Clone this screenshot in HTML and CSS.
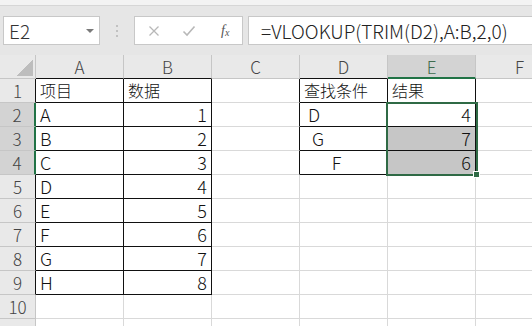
FILE: index.html
```html
<!DOCTYPE html>
<html lang="zh-CN">

<head>
    <meta charset="UTF-8" />
    <meta name="viewport" content="width=device-width, initial-scale=1.0" />
    <title>VLOOKUP TRIM</title>
    <link rel="stylesheet" href="styles.css">
</head>

<body>
    <div class="top-strip"></div>

    <div class="formula-bar">
        <div class="name-box">
            <span>E2</span>
            <span class="caret"></span>
        </div>
        <div class="grip">
            <svg width="4" height="14" viewBox="0 0 4 14">
                <circle cx="2" cy="2" r="1" fill="#b5b5b5" />
                <circle cx="2" cy="7" r="1" fill="#b5b5b5" />
                <circle cx="2" cy="12" r="1" fill="#b5b5b5" />
            </svg>
        </div>
        <div class="fx-box">
            <svg class="icon" width="12" height="12" viewBox="0 0 12 12">
                <path d="M1.5 1.5 L10.5 10.5 M10.5 1.5 L1.5 10.5" stroke="#b8b8b8" stroke-width="1.3" fill="none" />
            </svg>
            <svg class="icon" width="14" height="12" viewBox="0 0 14 12">
                <path d="M1.5 6.5 L5 10 L12.5 1.5" stroke="#b8b8b8" stroke-width="1.6" fill="none" />
            </svg>
            <span class="fx">f<sub>x</sub></span>
        </div>
        <div class="formula-input">=VLOOKUP(TRIM(D2),A:B,2,0)</div>
    </div>

    <div class="sheet" id="sheet">
        <div class="selection">
            <div class="fill-handle"></div>
        </div>
    </div>

    <script>
        const cols = ['', 'A', 'B', 'C', 'D', 'E', 'F'];
        const data = {
            1: ['项目', '数据', '', '查找条件', '结果'],
            2: ['A', 1, '', ' D', 4],
            3: ['B', 2, '', '  G', 7],
            4: ['C', 3, '', '       F', 6],
            5: ['D', 4],
            6: ['E', 5],
            7: ['F', 6],
            8: ['G', 7],
            9: ['H', 8]
        };

        // boxes with black borders: [firstRow, lastRow, firstCol, lastCol]
        const boxes = [[1, 9, 1, 2], [1, 4, 4, 5]];

        function inBox(r, c) {
            return boxes.some(b => r >= b[0] && r <= b[1] && c >= b[2] && c <= b[3]);
        }

        const sheet = document.getElementById('sheet');

        for (let r = 0; r <= 11; r++) {
            for (let c = 0; c <= 6; c++) {
                const cell = document.createElement('div');
                cell.className = 'cell';

                if (r === 0 || c === 0) cell.classList.add('head');
                if (r === 0 && c === 0) cell.classList.add('corner');

                if (inBox(r, c) || inBox(r + 1, c)) cell.classList.add('black-bottom');
                if (inBox(r, c) || inBox(r, c + 1)) cell.classList.add('black-right');

                // selection E2:E4
                if (r === 0 && c === 5) cell.classList.add('head-active', 'green-bottom');
                if (c === 0 && r >= 2 && r <= 4) cell.classList.add('head-active', 'green-right');
                if (c === 5 && (r === 3 || r === 4)) cell.classList.add('selected');

                if (r === 0 && c > 0) {
                    cell.textContent = cols[c];
                } else if (c === 0 && r > 0) {
                    cell.textContent = r <= 10 ? r : '';
                } else if (data[r] && data[r][c - 1] !== undefined) {
                    const value = data[r][c - 1];
                    cell.textContent = value;
                    if (typeof value === 'number') cell.classList.add('num');
                    if (r === 1) cell.classList.add('cjk');
                }

                sheet.appendChild(cell);
            }
        }
    </script>
</body>

</html>
```

FILE: styles.css
```css
body {
    margin: 0;
    width: 532px;
    height: 326px;
    overflow: hidden;
    background-color: white;
    font-family: "Noto Sans CJK SC", "Noto Sans", sans-serif;
}

.top-strip {
    height: 5px;
    background-color: #f3f3f3;
    border-bottom: 1px solid #d6d6d6;
}

.formula-bar {
    display: flex;
    align-items: center;
    height: 49px;
    padding-left: 3px;
    background-color: #e6e6e6;
}

.name-box {
    display: flex;
    align-items: center;
    justify-content: space-between;
    width: 97px;
    height: 29px;
    padding: 0 5px 0 5px;
    box-sizing: border-box;
    background-color: white;
    border: 1px solid #c8c8c8;
    font-size: 19px;
    font-weight: 300;
    color: #333;
}

.caret {
    width: 0;
    height: 0;
    border-left: 4px solid transparent;
    border-right: 4px solid transparent;
    border-top: 4px solid #7a7a7a;
}

.grip {
    display: flex;
    align-items: center;
    width: 34px;
    justify-content: center;
}

.fx-box {
    display: flex;
    align-items: center;
    width: 109px;
    height: 29px;
    padding-left: 13px;
    box-sizing: border-box;
    background-color: white;
    border: 1px solid #c8c8c8;
}

.fx-box .icon {
    margin-right: 22px;
}

.fx-box .icon + .icon {
    margin-right: 25px;
}

.fx {
    font-family: "Liberation Serif", serif;
    font-style: italic;
    font-size: 14px;
    color: #555;
}

.fx sub {
    font-size: 10px;
    vertical-align: -1px;
}

.formula-input {
    flex: 1;
    height: 29px;
    margin-left: 5px;
    padding-left: 12px;
    box-sizing: border-box;
    background-color: white;
    border: 1px solid #c8c8c8;
    border-right: none;
    font-size: 19px;
    font-weight: 300;
    line-height: 27px;
    color: #222;
    white-space: nowrap;
}

.sheet {
    position: relative;
    display: grid;
    grid-template-columns: 36px repeat(6, 88px);
    grid-auto-rows: 24px;
    width: 532px;
    height: 271px;
    overflow: hidden;
}

.cell {
    box-sizing: border-box;
    border-right: 1px solid #d9d9d9;
    border-bottom: 1px solid #d9d9d9;
    padding: 0 4px;
    font-size: 18px;
    font-weight: 300;
    line-height: 23px;
    color: #111;
    white-space: pre;
}

.cell.cjk {
    font-size: 16px;
}

.cell.num {
    text-align: right;
}

.cell.head {
    background-color: #e9e9e9;
    border-color: #c6c6c6;
    color: #444;
    font-size: 17px;
    text-align: center;
    padding: 0;
}

.cell.corner {
    background: linear-gradient(135deg, #e9e9e9 60%, #bdbdbd 60%);
    background-size: 20px 20px;
    background-position: right 2px bottom 2px;
    background-repeat: no-repeat;
    background-color: #e9e9e9;
}

.cell.head-active {
    background-color: #d3d3d3;
}

.cell.head-active.green-bottom {
    color: #3f6b4e;
}

.cell.black-bottom {
    border-bottom-color: #111;
}

.cell.black-right {
    border-right-color: #111;
}

.cell.green-bottom {
    border-bottom: 2px solid #217346;
}

.cell.green-right {
    border-right: 2px solid #217346;
}

.cell.selected {
    background-color: #c6c6c6;
}

.selection {
    position: absolute;
    left: 386px;
    top: 47px;
    width: 92px;
    height: 74px;
    border: 2px solid #2f6a45;
    box-sizing: border-box;
    pointer-events: none;
}

.fill-handle {
    position: absolute;
    right: -4px;
    bottom: -4px;
    width: 5px;
    height: 5px;
    background-color: #2f6a45;
    border: 1px solid white;
}
```
